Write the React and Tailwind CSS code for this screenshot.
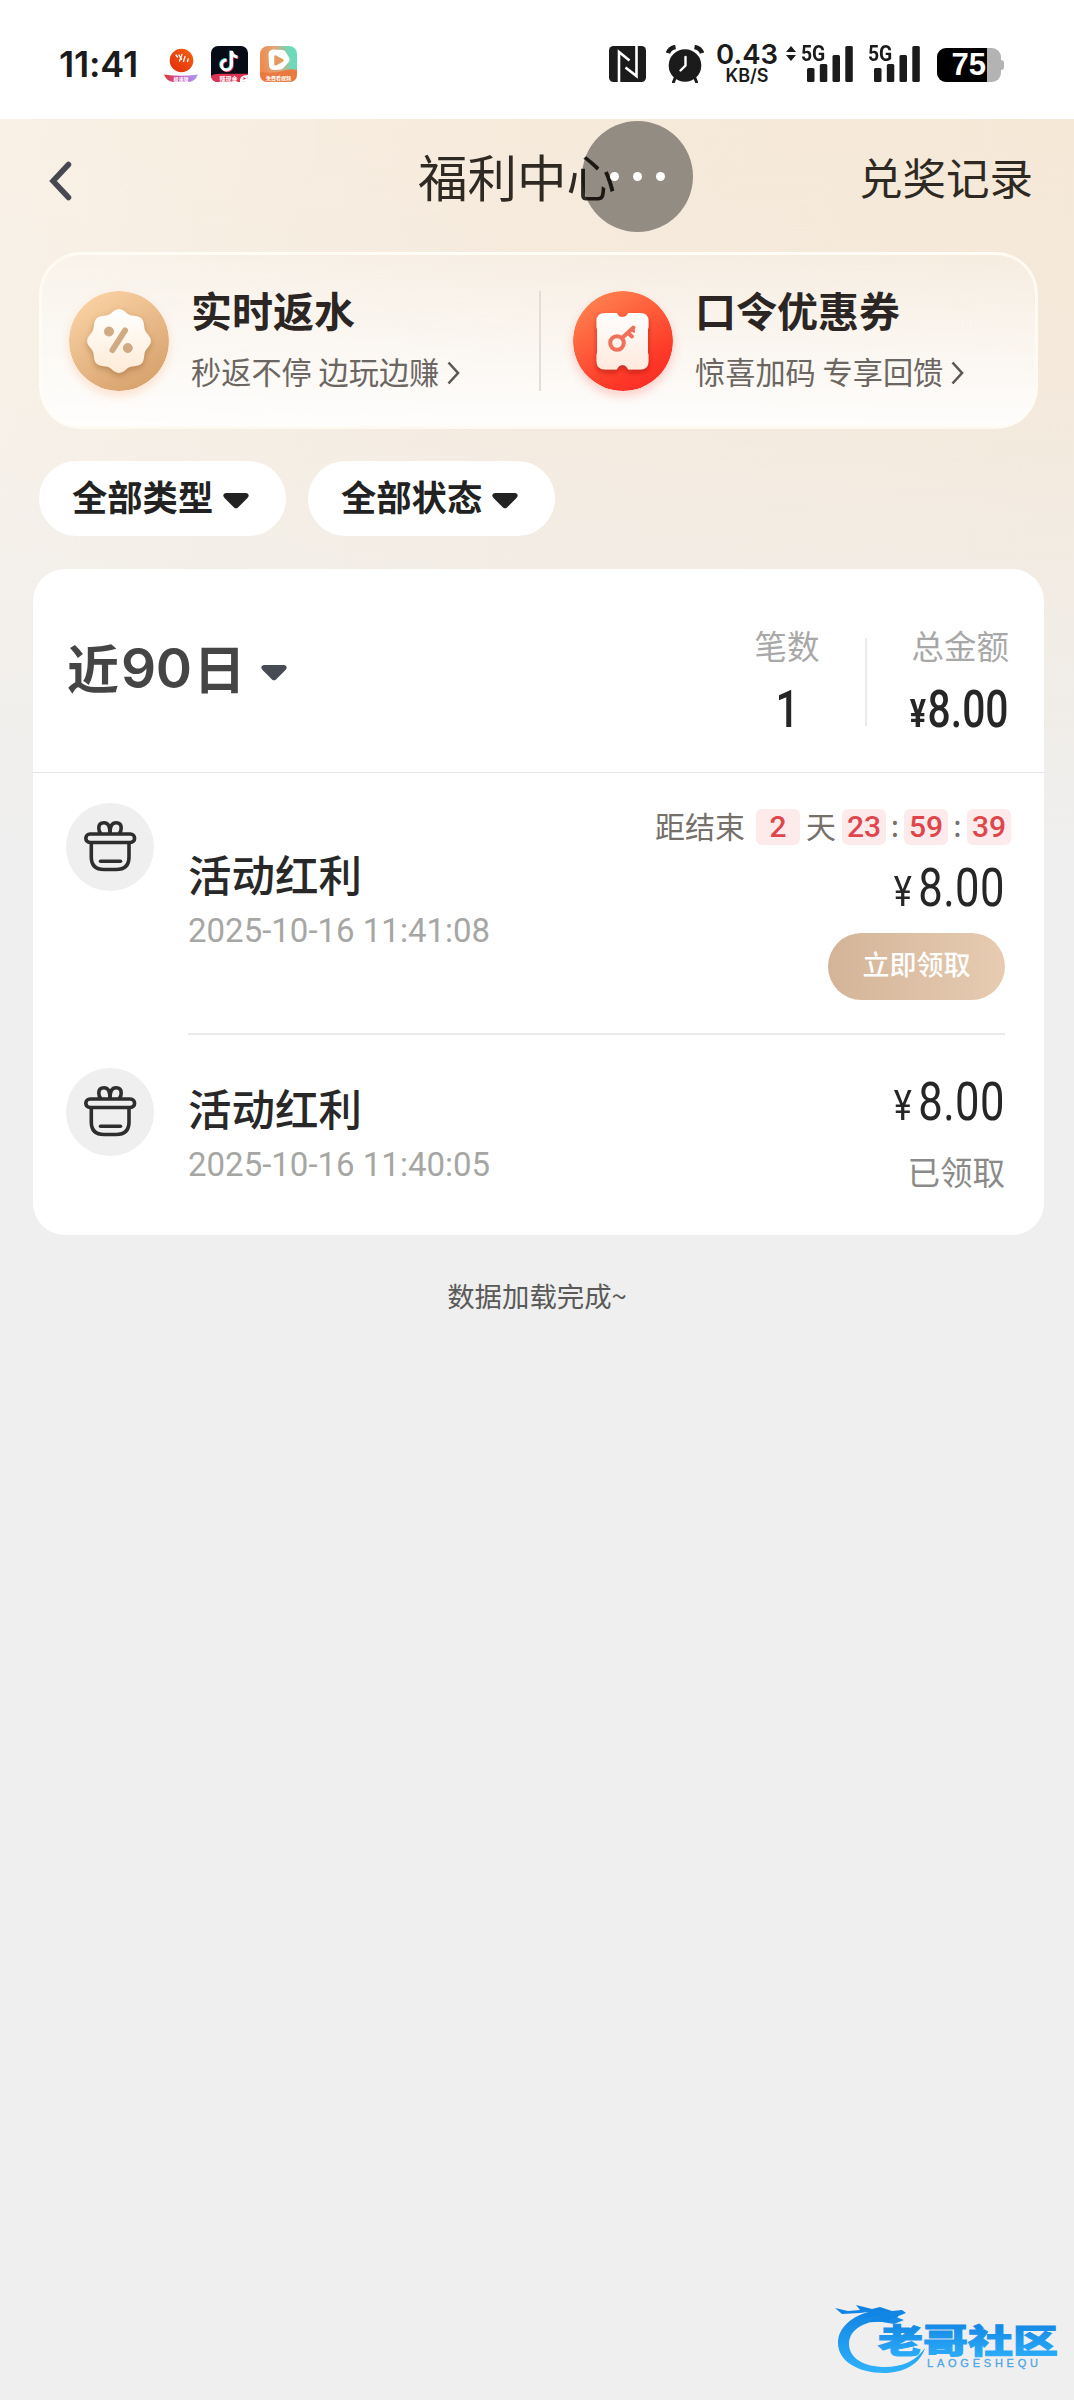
const promos = [
  { title: '实时返水', desc: '秒返不停 边玩边赚', icon: 'percent' },
  { title: '口令优惠券', desc: '惊喜加码 专享回馈', icon: 'ticket' },
];

const filters = ['全部类型', '全部状态'];

// outline of the eight-lobed badge
const badgePoints = Array.from({ length: 96 }, (_, i) => {
  const a = (i / 96) * Math.PI * 2;
  const r = 30 + 1.9 * Math.cos(a * 8);
  return `${(50 + r * Math.cos(a)).toFixed(2)},${(50 + r * Math.sin(a)).toFixed(2)}`;
}).join(' ');

const PercentIcon = () => (
  <svg viewBox="0 0 100 100" className="size-[100px] shrink-0 rounded-full shadow-[0_5px_10px_rgba(255,170,110,0.3)]">
    <defs>
      <linearGradient id="gold" x1="0.2" y1="0" x2="0.8" y2="1">
        <stop offset="0" stopColor="#fbd3a6" />
        <stop offset="1" stopColor="#d59f6a" />
      </linearGradient>
      <linearGradient id="cream" x1="0" y1="0" x2="0" y2="1">
        <stop offset="0" stopColor="#ffffff" />
        <stop offset="1" stopColor="#fdebd6" />
      </linearGradient>
      <filter id="soft" x="-20%" y="-20%" width="140%" height="150%">
        <feDropShadow dx="0" dy="3" stdDeviation="3" floodColor="#8a5a2c" floodOpacity="0.45" />
      </filter>
    </defs>
    <circle cx="50" cy="50" r="50" fill="url(#gold)" />
    <polygon points={badgePoints} fill="url(#cream)" filter="url(#soft)" />
    <g fill="#cfaa84" stroke="#cfaa84">
      <circle cx="40" cy="40.5" r="4.5" />
      <circle cx="58.8" cy="57" r="4.5" />
      <path d="M56 39.500 43.500 59" strokeWidth="6" strokeLinecap="round" />
    </g>
  </svg>
);

const TicketIcon = () => (
  <svg viewBox="0 0 100 100" className="size-[100px] shrink-0 rounded-full shadow-[0_5px_10px_rgba(255,80,60,0.25)]">
    <defs>
      <linearGradient id="red" x1="0.2" y1="0" x2="0.8" y2="1">
        <stop offset="0" stopColor="#ff8450" />
        <stop offset="0.75" stopColor="#fd3a28" />
        <stop offset="1" stopColor="#fb2b25" />
      </linearGradient>
      <linearGradient id="paper" x1="0" y1="0" x2="0" y2="1">
        <stop offset="0" stopColor="#ffffff" />
        <stop offset="1" stopColor="#ffe9dc" />
      </linearGradient>
      <filter id="ticketShadow" x="-20%" y="-20%" width="140%" height="150%">
        <feDropShadow dx="0" dy="3" stdDeviation="2.5" floodColor="#a01808" floodOpacity="0.55" />
      </filter>
    </defs>
    <circle cx="50" cy="50" r="50" fill="url(#red)" />
    <path
      d="M32 22H43.500C44.500 22 45 26 49.500 26S54.500 22 55.500 22H67.500Q75.500 22 75.500 30V36L75 38V62L75.500 64V70Q75.500 78.500 67.500 78.500H55.500C54.500 78.500 54 74 49.500 74S44.500 78.500 43.500 78.500H32Q23.500 78.500 23.500 70V64L24 62V38L23.500 36V30Q23.500 22 32 22Z"
      fill="url(#paper)"
      filter="url(#ticketShadow)"
    />
    <g fill="none" stroke="#f0705a" strokeWidth="4" strokeLinecap="round">
      <circle cx="44" cy="52" r="6.8" />
      <path d="M49 47 60.500 36.500M55 42 59 45.500" />
    </g>
    <path d="M56 40 61.500 35.500 62 42Z" fill="#f0705a" />
  </svg>
);

const GiftIcon = () => (
  <div className="flex size-[88px] shrink-0 rounded-full bg-[#efefef]">
    <svg viewBox="0 0 88 88" className="size-full" fill="none" stroke="#2e2e2e" strokeWidth="3.6" strokeLinecap="round" strokeLinejoin="round">
      <path d="M44 30C44 23 42 19.800 38 19.800C34 19.800 32.800 22.500 32.800 25C32.800 27.500 33.500 29 34.500 30" />
      <path d="M44 30C44 23 46 19.800 50 19.800C54 19.800 55.200 22.500 55.200 25C55.200 27.500 54.500 29 53.500 30" />
      <rect x="19.800" y="31" width="48.800" height="8.500" rx="4.250" />
      <path d="M25.300 40V54Q25.300 66.500 38 66.500H50Q63 66.500 63 54V40" />
      <path d="M34.500 58.300H54.500" />
    </svg>
  </div>
);

const Caret = ({ className }) => (
  <svg viewBox="0 0 26 16" className={className} fill="currentColor">
    <path d="M3 0H23Q26 .3 25.700 3L24.500 5 15 14.500Q13 16.200 11 14.500L1.500 5 .3 3Q0 .3 3 0Z" />
  </svg>
);

const SignalBars = () => (
  <svg viewBox="0 0 46 36" className="h-9 w-[46px]" fill="#1b1b1b">
    <rect x="0" y="22" width="7.500" height="14" rx="1.500" />
    <rect x="12.800" y="18" width="7.500" height="18" rx="1.500" />
    <rect x="25.500" y="9" width="7.500" height="27" rx="1.500" />
    <rect x="38.300" y="0" width="7.500" height="36" rx="1.500" />
  </svg>
);

const NewsApp = () => (
  <svg viewBox="0 0 36 36" className="size-9">
    <defs>
      <linearGradient id="banner">
        <stop offset="0" stopColor="#e8352c" />
        <stop offset="0.5" stopColor="#c35ac0" />
        <stop offset="1" stopColor="#a9a0f5" />
      </linearGradient>
      <linearGradient id="ball" x1="0" y1="1" x2="1" y2="0">
        <stop offset="0" stopColor="#e02a0c" />
        <stop offset="1" stopColor="#f7640f" />
      </linearGradient>
    </defs>
    <circle cx="18.500" cy="14.500" r="11.800" fill="url(#ball)" />
    <path d="M13 9 14.500 11M16 9 18.500 13.500M19 8.500 16.500 15M22 10.500 20.500 15.500M25.200 13 24.500 15.500" stroke="#fff" strokeWidth="1.300" strokeLinecap="round" />
    <path d="M1 28.500Q18 31 35 28.500Q32 36 25 36H11Q4 36 1 28.500Z" fill="url(#banner)" />
    <text x="18" y="34.500" textAnchor="middle" fontSize="5" fontWeight="700" fill="#fff">极速版</text>
  </svg>
);

const MusicApp = () => (
  <svg viewBox="0 0 37 36" className="h-9 w-[37px]">
    <rect width="37" height="36" rx="7" fill="#070b16" />
    <g fill="none" strokeWidth="3">
      <path d="M20.500 5V19A5 5 0 1 1 15.500 14M20.500 5.500Q21.500 10.500 26.500 11" stroke="#35e0e0" transform="translate(-.8 -.6)" />
      <path d="M20.500 5V19A5 5 0 1 1 15.500 14M20.500 5.500Q21.500 10.500 26.500 11" stroke="#f0355c" transform="translate(.8 .6)" />
      <path d="M20.500 5V19A5 5 0 1 1 15.500 14M20.500 5.500Q21.500 10.500 26.500 11" stroke="#fff" />
    </g>
    <path d="M0 30Q3 27.500 10 27.800H37V29Q37 36 30 36H7Q1 36 0 30Z" fill="#dd3352" />
    <path d="M29 36Q28 29 37 29V30Q37 36 30 36Z" fill="#fff" />
    <path d="M32.500 31 35 32.500 32.500 34Z" fill="#dd3352" />
    <text x="17.500" y="34.500" textAnchor="middle" fontSize="6" fontWeight="700" fill="#fff">赚现金</text>
  </svg>
);

const VideoApp = () => (
  <svg viewBox="0 0 37 36" className="h-9 w-[37px]">
    <defs>
      <linearGradient id="video" x1="0" y1="0.4" x2="1" y2="0.2">
        <stop offset="0" stopColor="#f08a4e" />
        <stop offset="0.45" stopColor="#e0a679" />
        <stop offset="0.8" stopColor="#6ed9b8" />
      </linearGradient>
    </defs>
    <rect width="37" height="36" rx="8" fill="url(#video)" />
    <path d="M0 26Q14 28 22 25T37 24V28Q37 36 29 36H8Q0 36 0 28Z" fill="#ea7a40" />
    <path d="M13 8 22 8.500 25 13.500 20 19 13.500 19.500Z" fill="#fff" stroke="#fff" strokeWidth="9" strokeLinejoin="round" />
    <path d="M15.500 10.500 22.500 14.300 15.500 18.300Z" fill="#e39a62" stroke="#e39a62" strokeWidth="2.500" strokeLinejoin="round" />
    <text x="18.500" y="34" textAnchor="middle" fontSize="5" fontWeight="700" fill="#fff">免费看视频</text>
  </svg>
);

const StatusBar = () => (
  <div className="flex h-[119px] items-start bg-white pt-[46px] pl-[59px] text-[#1b1b1b]">
    <div className="w-[104px] font-['Inter',sans-serif] text-[36px] leading-[36px] font-semibold tracking-[-.2px]">11:41</div>
    <NewsApp />
    <div className="ml-3"><MusicApp /></div>
    <div className="ml-3"><VideoApp /></div>

    <svg viewBox="0 0 37 36" className="ml-[312px] h-9 w-[37px]">
      <rect width="37" height="36" rx="4.500" fill="#1b1b1b" />
      <path d="M10 36V6L20.500 14.500M27.500 0V30L16.500 21.500" fill="none" stroke="#fff" strokeWidth="2.600" />
    </svg>
    <svg viewBox="0 0 38 38" className="-mt-px ml-5 size-[38px]">
      <g stroke="#1b1b1b" fill="none">
        <path d="M2 8Q3.500 3 9.500 2M28.500 2Q34.500 3 36 8" strokeWidth="4.500" />
        <path d="M9.500 32 7.500 37M28.500 32 30.500 37" strokeWidth="3" strokeLinecap="round" />
      </g>
      <circle cx="19" cy="20.500" r="16.300" fill="#1b1b1b" />
      <path d="M19.500 12V20.500L14.500 25.500" fill="none" stroke="#fff" strokeWidth="2.400" strokeLinecap="round" />
    </svg>
    <div className="ml-3 w-[62px] text-center font-['Inter',sans-serif] font-semibold">
      <div className="-mt-1.5 h-[27px] text-[27.5px] leading-[28px]">0.43</div>
      <div className="text-[18px] leading-[18px]">KB/S</div>
    </div>
    <svg viewBox="0 0 10 15" className="ml-2 h-[15px] w-2.5" fill="#1b1b1b">
      <path d="M5 0 10 6H0ZM5 15 0 9H10Z" />
    </svg>
    <div className="relative ml-[11px]">
      <SignalBars />
      <span className="absolute -top-[3px] -left-[6px] origin-left scale-x-90 font-['Roboto',sans-serif] text-[21.5px] leading-[22px] font-bold">5G</span>
    </div>
    <div className="relative ml-[21px]">
      <SignalBars />
      <span className="absolute -top-[3px] -left-[6px] origin-left scale-x-90 font-['Roboto',sans-serif] text-[21.5px] leading-[22px] font-bold">5G</span>
    </div>
    <div className="mt-0.5 ml-[17px] flex items-center">
      <div className="flex h-[34px] w-[64px] overflow-hidden rounded-[9px] bg-[#b3b3b3]">
        <div className="w-[50px] bg-black pr-px text-right font-['Liberation_Sans',sans-serif] text-[31px] leading-[34px] font-bold text-white">75</div>
      </div>
      <div className="h-2.5 w-[3px] rounded-r bg-[#b3b3b3]" />
    </div>
  </div>
);

const NavBar = () => (
  <div className="relative flex h-[120px] items-center pr-[41px] pl-[49px] text-[#2e2922]">
    <svg viewBox="0 0 23 40" className="mt-1 h-10 w-[23px]" fill="none" stroke="#474852" strokeWidth="5.500" strokeLinecap="round">
      <path d="M19.500 3.500 4 20 19.500 36.500" />
    </svg>
    <h1 className="-mt-1.5 ml-[346px] text-[49.5px] leading-[60px] whitespace-nowrap">福利中心</h1>
    <span className="-mt-1 ml-auto text-[43.5px] leading-[60px] whitespace-nowrap">兑奖记录</span>
    {/* floating assistive button */}
    <div className="absolute top-0.5 left-[582px] flex size-[111px] items-center justify-center gap-3.5 rounded-full bg-black/40">
      <i className="size-[9px] rounded-full bg-white" />
      <i className="size-[9px] rounded-full bg-white" />
      <i className="size-[9px] rounded-full bg-white" />
    </div>
  </div>
);

const PromoCard = () => (
  <div className="mx-[39px] mt-[13px] flex h-[177px] w-[999px] items-center rounded-[42px] border-[3px] border-[#fffcf4]/80 bg-linear-to-b from-white/20 to-white/90">
    {promos.map((p, i) => (
      <div key={p.title} className={i ? 'flex h-[100px] items-center border-l-2 border-[#e4ddd5] pl-8' : 'flex h-[100px] w-[497px] items-center pl-[27px]'}>
        {p.icon === 'percent' ? <PercentIcon /> : <TicketIcon />}
        <div className="-mt-1.5 ml-[22px]">
          <div className="text-[41px] leading-[50px] font-bold text-[#2b2623]">{p.title}</div>
          <div className="mt-[17px] flex items-center text-[30.2px] leading-10 text-[#6b6661]">
            {p.desc}
            <svg viewBox="0 0 13 24" className="mt-1 ml-2 h-6 w-[13px]" fill="none" stroke="#5c5753" strokeWidth="2.600">
              <path d="M1.500 1.500 11 12 1.500 22.500" />
            </svg>
          </div>
        </div>
      </div>
    ))}
  </div>
);

const Amount = ({ children }) => (
  <div className="flex origin-right scale-x-[.8] items-baseline font-['Roboto',sans-serif] leading-[54px] text-[#262626]">
    <span className="mr-2 text-[43px]">¥</span>
    <span className="text-[54.5px] tracking-[.5px]">{children}</span>
  </div>
);

const TimeBox = ({ children }) => (
  <span className="flex h-9 w-11 items-center justify-center rounded-md bg-[#fdebeb] font-['Roboto',sans-serif] text-[30px] font-medium text-[#de464b]">{children}</span>
);

const Summary = () => (
  <div className="flex h-[204px] items-start border-b border-[#e6e6e6] pl-[34px]">
    <div className="mt-16 flex w-[220px] items-center text-[52px] leading-[66px] font-bold text-[#454545]">
      近<span className="mx-0.5 mt-0.5 font-['Inter',sans-serif] text-[55px] font-semibold tracking-[-.5px]">90</span>日
      <Caret className="mt-3 ml-[15px] h-4 w-[26px] shrink-0 text-[#474b54]" />
    </div>
    <div className="mt-[56px] ml-[468px] flex w-[64px] flex-col items-center">
      <span className="text-[32.5px] leading-10 whitespace-nowrap text-[#a8a8a8]">笔数</span>
      <span className="mt-[18px] scale-x-[.82] font-['Roboto',sans-serif] text-[51px] leading-[54px] font-medium text-[#262626]">1</span>
    </div>
    <div className="mt-[69px] ml-[46px] h-[88px] w-0.5 bg-[#ebebeb]" />
    <div className="mt-[56px] ml-[44px] flex w-[98px] flex-col items-end">
      <span className="text-[32.5px] leading-10 whitespace-nowrap text-[#a8a8a8]">总金额</span>
      <div className="mt-[18px] flex origin-right scale-x-[.8] items-baseline font-['Roboto',sans-serif] leading-[54px] font-medium text-[#262626]">
        <span className="mr-0.5 text-[38px] font-bold">¥</span>
        <span className="text-[51px]">8.00</span>
      </div>
    </div>
  </div>
);

const RowText = ({ time }) => (
  <>
    <div className="text-[43.5px] leading-[54px] font-medium text-[#282828]">活动红利</div>
    <div className="mt-2.5 font-['Roboto',sans-serif] text-[33px] leading-10 text-[#a6a6a4]">{time}</div>
  </>
);

const Records = () => (
  <>
    <div className="flex h-[262px] pl-[33px]">
      <div className="mt-[30px]"><GiftIcon /></div>
      <div className="ml-[34px] flex w-[817px] justify-between border-b-2 border-[#ebebeb]">
        <div className="mt-[74px]"><RowText time="2025-10-16 11:41:08" /></div>
        <div className="mt-9 -mr-1.5 flex flex-col items-end">
          <div className="flex items-center text-[30px] leading-9 text-[#76706b]">
            <span className="-mt-1 mr-[11px]">距结束</span>
            <TimeBox>2</TimeBox>
            <span className="-mt-1 mx-1.5">天</span>
            <TimeBox>23</TimeBox>
            <span className="-mt-1.5 w-[18px] text-center">:</span>
            <TimeBox>59</TimeBox>
            <span className="-mt-1.5 w-[19px] text-center">:</span>
            <TimeBox>39</TimeBox>
          </div>
          <div className="mt-[15px] mr-1.5"><Amount>8.00</Amount></div>
          <button className="mt-[15px] mr-1.5 h-[67px] w-[177px] rounded-full bg-linear-to-r from-[#d3b499] to-[#e7ccb1] pb-1 text-[27px] font-medium text-white">立即领取</button>
        </div>
      </div>
    </div>
    <div className="flex h-[199px] pl-[33px]">
      <div className="mt-[33px]"><GiftIcon /></div>
      <div className="ml-[34px] flex w-[817px] justify-between">
        <div className="mt-[46px]"><RowText time="2025-10-16 11:40:05" /></div>
        <div className="mt-[39px] flex flex-col items-end">
          <Amount>8.00</Amount>
          <span className="mt-[19px] text-[32.5px] leading-10 text-[#8a8a88]">已领取</span>
        </div>
      </div>
    </div>
  </>
);

const Watermark = () => (
  <svg viewBox="0 0 224 72" className="absolute right-4 bottom-6 h-[72px] w-[224px]">
    <defs>
      <linearGradient id="blue" x1="0" y1="0" x2="0" y2="1">
        <stop offset="0" stopColor="#0f7fe0" />
        <stop offset="1" stopColor="#2fb2fb" />
      </linearGradient>
    </defs>
    <path d="M34 8C14 14 4 26 4 39C4 57 24 69 50 69C70 69 86 60 91 44C82 57 68 63 51 63C30 63 15 54 15 40C15 28 25 20 42 17L60 20 70 16 62 13 72 9 68 6 58 7 46 3 38 5 22 1 26 6 14 7 1 4 8 10 26 9Z" fill="url(#blue)" />
    <path d="M30 12 52 9 48 14 64 12M36 17 56 16" stroke="#0f86e6" strokeWidth="2.500" fill="none" />
    <text x="44" y="49" textLength="180" lengthAdjust="spacingAndGlyphs" fontSize="33" fontWeight="900" fill="url(#blue)" stroke="url(#blue)" strokeWidth="1">老哥社区</text>
    <text x="93" y="63" textLength="111" fontSize="11" fontFamily="Liberation Sans, sans-serif" fill="#4ba6e6" stroke="#4ba6e6" strokeWidth=".3">LAOGESHEQU</text>
  </svg>
);

const App = () => {
  return (
    <div className="relative flex h-[2400px] w-[1074px] flex-col overflow-hidden bg-[#efefef] font-['Noto_Sans_CJK_SC',sans-serif]">
      <StatusBar />
      <div className="flex-1 bg-[linear-gradient(180deg,rgba(239,239,239,0)_0px,rgba(239,239,239,0.15)_240px,rgba(239,239,239,1)_740px),linear-gradient(90deg,#f9f1e6_0%,#f6eadb_50%,#f5e8d7_100%)]">
        <NavBar />
        <PromoCard />
        <div className="mt-8 ml-[39px] flex gap-[22px]">
          {filters.map((label) => (
            <button key={label} className="flex h-[75px] w-[247px] items-center rounded-full bg-white pl-[33px] text-[#222]">
              <span className="-mt-1.5 text-[35.3px] leading-[50px] font-bold">{label}</span>
              <Caret className="mt-1 ml-2.5 h-4 w-[26px]" />
            </button>
          ))}
        </div>
        <div className="mx-[33px] mt-[33px] h-[666px] w-[1011px] rounded-[32px] bg-white">
          <Summary />
          <Records />
        </div>
        <p className="mt-10 text-center text-[27.4px] leading-10 text-[#5a5a58]">数据加载完成~</p>
      </div>
      <Watermark />
    </div>
  );
};

export default App;
